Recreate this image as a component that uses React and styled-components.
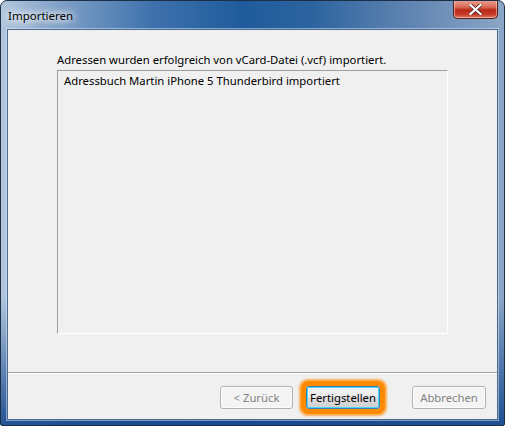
import React from 'react';
import styled, { createGlobalStyle } from 'styled-components';

const GlobalStyle = createGlobalStyle`
  html, body {
    margin: 0;
    padding: 0;
    background: #ffffff;
  }
  body {
    font-family: 'Segoe UI', 'Noto Sans', sans-serif;
    font-size: 11.3px;
  }
`;

const Window = styled.div`
  width: 505px;
  height: 426px;
  box-sizing: border-box;
  display: flex;
  flex-direction: column;
  border: 1px solid #1b2f47;
  border-radius: 7px 7px 2px 2px;
  background:
    linear-gradient(180deg, rgba(255, 255, 255, 0) 0%, rgba(255, 255, 255, 0) 70%, rgba(20, 70, 140, 0.9) 100%),
    linear-gradient(90deg, #b3c7de 0%, #7e9fc6 12%, #3f72ad 30%, #1f5b9c 48%, #2d649f 62%, #5d82b0 80%, #8ba6c6 100%);
  padding: 0 6px 5px 6px;
  overflow: hidden;
`;

const TitleBar = styled.div`
  height: 28px;
  flex: none;
  display: flex;
  align-items: flex-start;
  justify-content: space-between;
`;

const Title = styled.span`
  margin-top: 7px;
  margin-left: 1px;
  color: #000000;
  font-size: 11.5px;
  text-shadow: 0 0 6px #ffffff, 0 0 8px #ffffff, 0 0 10px rgba(255, 255, 255, 0.9);
`;

const CloseButton = styled.div`
  width: 45px;
  height: 19px;
  margin-top: -1px;
  box-sizing: border-box;
  border: 1px solid #5a1e1a;
  border-top: none;
  border-radius: 0 0 5px 5px;
  background: linear-gradient(180deg, #eaa495 0%, #d86a55 40%, #b8281a 55%, #c73a26 80%, #df7a64 100%);
  box-shadow: inset 0 0 0 1px rgba(255, 220, 210, 0.55);
  display: flex;
  align-items: center;
  justify-content: center;
`;

const Client = styled.div`
  flex: 1;
  display: flex;
  flex-direction: column;
  background: #f0f0f0;
  border: 1px solid #4a6a90;
  box-shadow: 0 0 0 1px rgba(220, 235, 250, 0.5);
`;

const Content = styled.div`
  flex: 1;
  display: flex;
  flex-direction: column;
  padding: 22px 0 0 49px;
`;

const Label = styled.div`
  color: #000000;
  line-height: 16px;
  height: 16px;
  margin-bottom: 2px;
`;

const ListBox = styled.div`
  width: 391px;
  height: 264px;
  box-sizing: border-box;
  border-top: 1px solid #a0a0a0;
  border-left: 1px solid #a0a0a0;
  border-right: 1px solid #ffffff;
  border-bottom: 1px solid #ffffff;
  padding: 2px 0 0 6px;
`;

const ListItem = styled.div`
  line-height: 16px;
  color: #000000;
`;

const Footer = styled.div`
  flex: none;
  height: 47px;
  box-sizing: border-box;
  border-top: 1px solid #a0a0a0;
  box-shadow: inset 0 1px 0 #ffffff;
  display: flex;
  align-items: flex-start;
  padding: 13px 11px 0 0;
`;

const Button = styled.button`
  height: 23px;
  width: ${p => p.$w || 74}px;
  margin-left: ${p => p.$ml || 0}px;
  box-sizing: border-box;
  font-family: inherit;
  font-size: 11.3px;
  padding: 0;
  border-radius: 3px;
  border: 1px solid ${p => (p.$default ? '#3c7fb1' : '#adb2b5')};
  color: ${p => (p.disabled ? '#838383' : '#000000')};
  background: ${p =>
    p.disabled
      ? '#f4f4f4'
      : 'linear-gradient(180deg, #f2f2f2 0%, #ebebeb 48%, #dddddd 52%, #cfcfcf 100%)'};
  box-shadow: ${p =>
    p.$default
      ? 'inset 0 0 0 1px #48d8fb, 0 0 0 5px #ff8a00, 0 0 2px 7px rgba(255, 150, 30, 0.75)'
      : 'inset 0 0 0 1px #fcfcfc'};
`;

const Spacer = styled.div`
  flex: 1;
`;

export default function App() {
  return (
    <>
      <GlobalStyle />
      <Window>
        <TitleBar>
          <Title>Importieren</Title>
          <CloseButton>
            <svg width="13" height="11" viewBox="0 0 13 11">
              <path
                d="M1.5 1 L11.5 10 M11.5 1 L1.5 10"
                stroke="#3a1a16"
                strokeWidth="3.6"
                strokeLinecap="square"
              />
              <path
                d="M1.5 1 L11.5 10 M11.5 1 L1.5 10"
                stroke="#ffffff"
                strokeWidth="2.2"
                strokeLinecap="square"
              />
            </svg>
          </CloseButton>
        </TitleBar>
        <Client>
          <Content>
            <Label>Adressen wurden erfolgreich von vCard-Datei (.vcf) importiert.</Label>
            <ListBox>
              <ListItem>Adressbuch Martin iPhone 5 Thunderbird importiert</ListItem>
            </ListBox>
          </Content>
          <Footer>
            <Spacer />
            <Button disabled $w={73}>&lt; Zurück</Button>
            <Button $default $ml={13}>Fertigstellen</Button>
            <Button disabled $ml={32}>Abbrechen</Button>
          </Footer>
        </Client>
      </Window>
    </>
  );
}
